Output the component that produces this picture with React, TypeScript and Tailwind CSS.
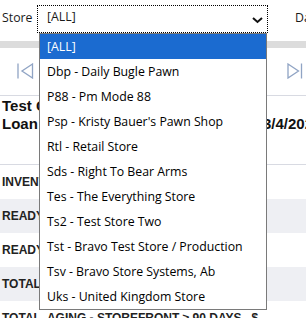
import React from "react";

const items = [
  "[ALL]",
  "Dbp - Daily Bugle Pawn",
  "P88 - Pm Mode 88",
  "Psp - Kristy Bauer's Pawn Shop",
  "Rtl - Retail Store",
  "Sds - Right To Bear Arms",
  "Tes - The Everything Store",
  "Ts2 - Test Store Two",
  "Tst - Bravo Test Store / Production",
  "Tsv - Bravo Store Systems, Ab",
  "Uks - United Kingdom Store",
];

const rows = [
  { label: "INVENTORY - STOREFRONT", grey: false },
  { label: "READY FOR SALE - STOREFRONT", grey: true },
  { label: "READY FOR SALE - WAREHOUSE", grey: false },
  { label: "TOTAL INVENTORY", grey: true },
  { label: "TOTAL  AGING - STOREFRONT ≥ 90 DAYS   $", grey: false },
];

export default function App() {
  return (
    <div className="relative w-[306px] h-[318px] overflow-hidden bg-white font-['Open_Sans',sans-serif] text-[12.3px] text-[#1a1a1a]">
      {/* header */}
      <div className="flex h-[38px] items-center">
        <span className="w-[37px] shrink-0 pl-[2px] pb-[2px]">Store</span>
        <div className="relative mb-[1px] flex h-[28px] w-[231px] shrink-0 items-center border border-dotted border-black bg-white pl-[9px]">
          <span className="pb-[2px]">[ALL]</span>
          <svg className="absolute right-[4px] top-[11px]" width="11" height="7" viewBox="0 0 11 7">
            <polyline points="1,1 5.5,5 10,1" fill="none" stroke="#111" strokeWidth="2" />
          </svg>
        </div>
        <span className="ml-[27px] shrink-0 pb-[2px] whitespace-nowrap">Date</span>
      </div>
      <div className="mt-[3px] h-[7px] bg-[#dcdcdc]" />
      {/* nav */}
      <div className="flex h-[47px] items-center justify-between px-[17px] pr-[3px] pb-[2px]">
        <svg width="17" height="16" viewBox="0 0 17 16">
          <line x1="1" y1="0.5" x2="1" y2="15.5" stroke="#90a4c4" strokeWidth="1.3" />
          <polygon points="15.5,1 5,8 15.5,15" fill="none" stroke="#90a4c4" strokeWidth="1.3" />
        </svg>
        <svg width="16" height="16" viewBox="0 0 16 16">
          <polygon points="1,1 11.5,8 1,15" fill="none" stroke="#90a4c4" strokeWidth="1.3" />
          <line x1="14.5" y1="0.5" x2="14.5" y2="15.5" stroke="#90a4c4" strokeWidth="1.3" />
        </svg>
      </div>
      <div className="h-px bg-[#d8dae2]" />
      {/* title */}
      <div className="h-[68px] pt-[1px] font-['Liberation_Sans',Arial,sans-serif] text-[15px] font-bold leading-[18px] text-[#111]">
        <div className="pl-[2px]">Test Company</div>
        <div className="grid grid-cols-[263px_auto] whitespace-nowrap">
          <span className="pl-[2px]">Loan Aging Report</span>
          <span>3/4/2024</span>
        </div>
      </div>
      <div className="h-px bg-[#d8dae2]" />
      {/* rows */}
      <div className="font-['Liberation_Sans',Arial,sans-serif] text-[12px] font-bold text-[#222]">
        {rows.map((r) => (
          <div
            key={r.label}
            className={`flex h-[34px] items-center whitespace-pre pl-[2px] ${r.grey ? "bg-[#eeeff3]" : "bg-white"}`}
          >
            {r.label}
          </div>
        ))}
      </div>
      {/* dropdown */}
      <div className="absolute left-[39px] top-[33px] w-[228px] border border-[#7a7a7a] bg-white">
        {items.map((it, i) => (
          <div
            key={it}
            className={`flex h-[25px] items-center whitespace-nowrap pl-[7px] pt-[1px] ${
              i === 0 ? "bg-[#1b6bd0] text-white" : "text-black"
            }`}
          >
            {it}
          </div>
        ))}
      </div>
    </div>
  );
}
